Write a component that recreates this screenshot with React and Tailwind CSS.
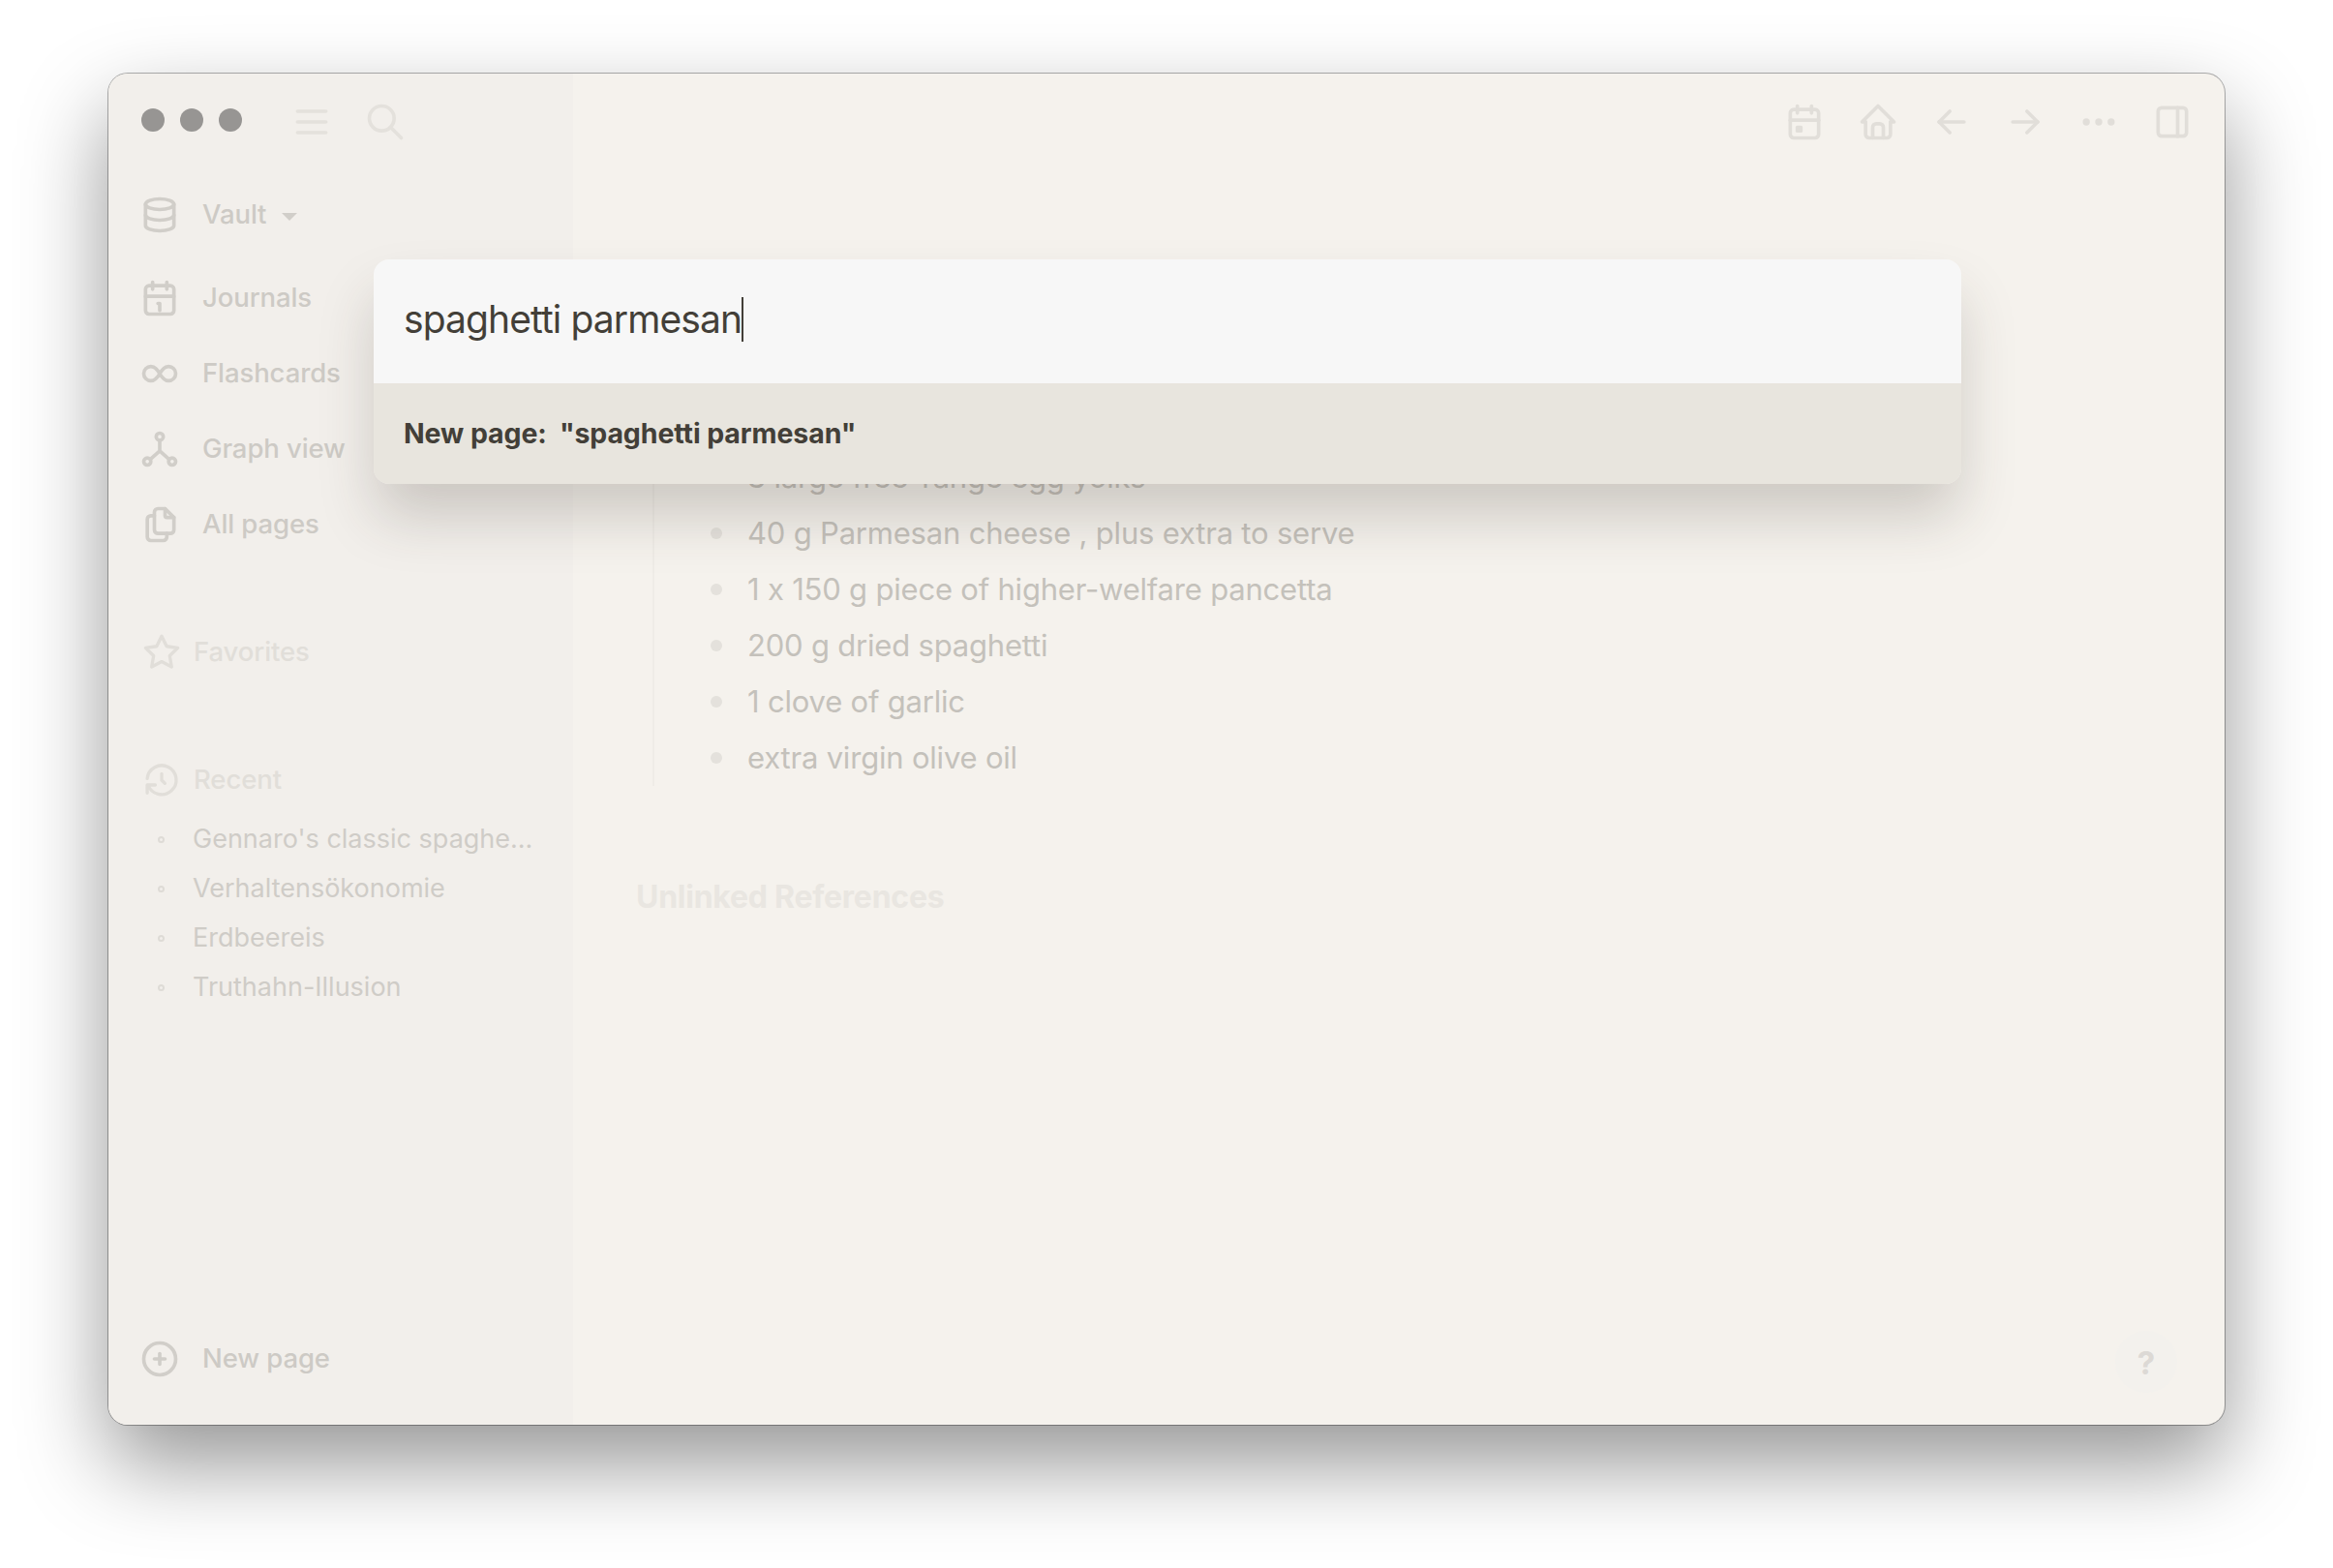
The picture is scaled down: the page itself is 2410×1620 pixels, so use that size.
import React from 'react';
import {
  TbDatabase, TbInfinity, TbFiles, TbStar, TbHistory, TbCirclePlus, TbMenu2, TbSearch,
  TbCalendarEvent, TbHome, TbArrowLeft, TbArrowRight, TbDots, TbLayoutSidebarRight,
} from 'react-icons/tb';

const JournalIcon = () => (
  <svg viewBox="0 0 24 24" className="w-[44px] h-[44px]" fill="none" stroke="currentColor" strokeWidth="2" strokeLinecap="round" strokeLinejoin="round">
    <path d="M4 7a2 2 0 0 1 2 -2h12a2 2 0 0 1 2 2v12a2 2 0 0 1 -2 2h-12a2 2 0 0 1 -2 -2v-12z" />
    <path d="M16 3v4M8 3v4M4 11h16M11 15h1v4" />
  </svg>
);

const GraphIcon = () => (
  <svg viewBox="0 0 24 24" className="w-[44px] h-[44px]" fill="none" stroke="currentColor" strokeWidth="2" strokeLinecap="round" strokeLinejoin="round">
    <circle cx="12" cy="5" r="2" />
    <circle cx="5" cy="19" r="2" />
    <circle cx="19" cy="19" r="2" />
    <path d="M12 7v6M12 13l-5.2 4.6M12 13l5.2 4.6" />
  </svg>
);

const NavRow = ({ icon, label, className = '' }) => (
  <div className={`flex items-center h-[44px] gap-[22px] pl-[31px] text-[27.5px] font-medium tracking-[-0.1px] text-[#cdcac5] ${className}`}>
    <span className="w-[44px] h-[44px] flex items-center justify-center text-[#d1cec9]">{icon}</span>
    <span>{label}</span>
  </div>
);

const SectionRow = ({ icon, label, className = '' }) => (
  <div className={`flex items-center h-[44px] gap-[13px] pl-[35px] text-[27.5px] font-medium tracking-[-0.1px] text-[#e1ded9] ${className}`}>
    <span className="w-[40px] h-[40px] flex items-center justify-center">{icon}</span>
    <span>{label}</span>
  </div>
);

const recent = ["Gennaro's classic spaghe...", 'Verhaltensökonomie', 'Erdbeereis', 'Truthahn-Illusion'];
const ingredients = [
  '3 large free-range egg yolks',
  '40 g Parmesan cheese , plus extra to serve',
  '1 x 150 g piece of higher-welfare pancetta',
  '200 g dried spaghetti',
  '1 clove of garlic',
  'extra virgin olive oil',
];

const App = () => (
  <div className="w-[2410px] h-[1620px] overflow-hidden bg-white pt-[76px] pl-[112px] font-['Inter',sans-serif] [font-feature-settings:'calt'_0]">
    <div className="relative flex w-[2186px] h-[1396px] rounded-[20px] bg-[#f5f2ed] shadow-[0_0_0_1px_rgba(0,0,0,0.3),0_40px_90px_0_rgba(0,0,0,0.42)]">
      {/* sidebar */}
      <aside className="flex flex-col w-[480px] h-full rounded-l-[20px] bg-[#f2efeb]">
        <div className="flex items-center h-[100px] pl-[34px] shrink-0">
          <div className="flex gap-[16px] mb-[4px]">
            <span className="w-[24px] h-[24px] rounded-full bg-[#979593]" />
            <span className="w-[24px] h-[24px] rounded-full bg-[#979593]" />
            <span className="w-[24px] h-[24px] rounded-full bg-[#979593]" />
          </div>
          <TbMenu2 className="ml-[50px] w-[44px] h-[44px] text-[#e4e1dc]" />
          <TbSearch className="ml-[32px] w-[44px] h-[44px] text-[#e4e1dc]" />
        </div>

        <NavRow
          className="mt-[24px]"
          icon={<TbDatabase className="w-[44px] h-[44px]" />}
          label={
            <span className="flex items-center gap-[16px]">
              Vault
              <span className="w-0 h-0 mt-[3px] border-x-[8px] border-x-transparent border-t-[8px] border-t-[#d1cec9]" />
            </span>
          }
        />
        <NavRow className="mt-[42px]" icon={<JournalIcon />} label="Journals" />
        <NavRow className="mt-[34px]" icon={<TbInfinity className="w-[44px] h-[44px]" />} label="Flashcards" />
        <NavRow className="mt-[34px]" icon={<GraphIcon />} label="Graph view" />
        <NavRow className="mt-[34px]" icon={<TbFiles className="w-[44px] h-[44px]" />} label="All pages" />

        <SectionRow className="mt-[88px]" icon={<TbStar className="w-[40px] h-[40px]" />} label="Favorites" />
        <SectionRow className="mt-[88px]" icon={<TbHistory className="w-[40px] h-[40px]" />} label="Recent" />

        <div className="mt-[14px] flex flex-col">
          {recent.map((item) => (
            <div key={item} className="flex items-center h-[51px] pl-[51px] text-[27px] text-[#cfccc7]">
              <span className="w-[7px] h-[7px] rounded-full border-2 border-[#dedbd6]" />
              <span className="ml-[29px]">{item}</span>
            </div>
          ))}
        </div>

        <NavRow className="mt-auto mb-[46px]" icon={<TbCirclePlus className="w-[44px] h-[44px]" />} label="New page" />
      </aside>

      {/* page */}
      <main className="flex-1 flex flex-col">
        <div className="flex items-center justify-end h-[100px] pr-[32px] gap-[32px] text-[#e1ded9] shrink-0">
          <TbCalendarEvent className="w-[44px] h-[44px]" />
          <TbHome className="w-[44px] h-[44px]" />
          <TbArrowLeft className="w-[44px] h-[44px]" />
          <TbArrowRight className="w-[44px] h-[44px]" />
          <TbDots className="w-[44px] h-[44px]" />
          <TbLayoutSidebarRight className="w-[44px] h-[44px]" />
        </div>

        <div className="mt-[288px] ml-[82px] pl-[58px] border-l-2 border-[#efece7] flex flex-col">
          {ingredients.map((item) => (
            <div key={item} className="flex items-center h-[58px] text-[31px] tracking-[-0.2px] text-[#c4c1bb]">
              <span className="w-[12px] h-[12px] rounded-full bg-[#e4e1dc]" />
              <span className="ml-[26px]">{item}</span>
            </div>
          ))}
        </div>

        <h2 className="mt-[92px] ml-[65px] text-[32px] leading-[46px] font-bold tracking-[-0.25px] text-[#e9e6e1]">Unlinked References</h2>
      </main>

      {/* help button */}
      <div className="absolute right-[49px] bottom-[33px] flex items-center justify-center w-[64px] h-[64px] pt-[3px] rounded-full bg-[#f3f1ed] text-[33px] font-bold text-[#dcd9d5]">?</div>

      {/* search palette */}
      <div className="absolute left-[274px] top-[192px] w-[1640px] rounded-[16px] shadow-[0_36px_60px_-4px_rgba(60,50,40,0.22)] overflow-hidden">
        <div className="flex items-center h-[128px] pl-[31px] bg-[#f7f7f7] text-[39px] tracking-[-0.9px] text-[#433f38]">
          <span className="mb-[4px]">spaghetti parmesan</span>
          <span className="w-[2px] h-[46px] bg-[#433f38] mb-[4px]" />
        </div>
        <div className="flex items-center h-[104px] pl-[31px] bg-[#e8e5de] text-[28.5px] font-bold tracking-[-0.1px] text-[#433f38] whitespace-pre">
          New page:{'  '}"spaghetti parmesan"
        </div>
      </div>
    </div>
  </div>
);

export default App;
